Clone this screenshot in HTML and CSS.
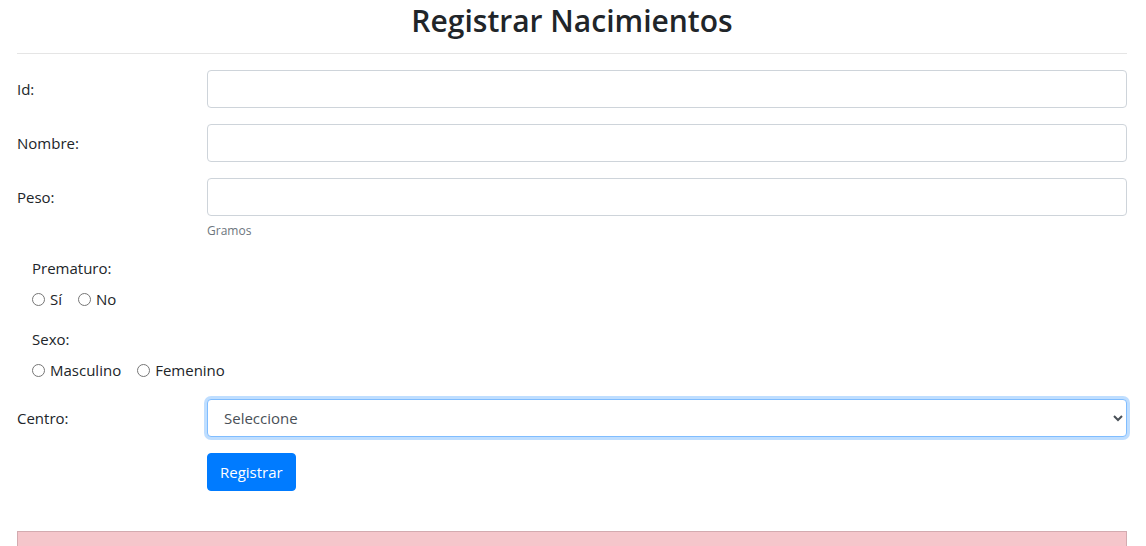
FILE: index.html
```html
<!DOCTYPE html>
<html lang="es">
<head>
<meta charset="utf-8">
<title>Registrar Nacimientos</title>
<link rel="stylesheet" href="styles.css">
</head>
<body>
<main class="container">
  <h1 class="title">Registrar Nacimientos</h1>
  <hr class="divider">
  <form class="form">
    <div class="row">
      <label class="label" for="id">Id:</label>
      <input class="control" id="id" type="text">
    </div>
    <div class="row">
      <label class="label" for="nombre">Nombre:</label>
      <input class="control" id="nombre" type="text">
    </div>
    <div class="row">
      <label class="label" for="peso">Peso:</label>
      <div class="field">
        <input class="control" id="peso" type="text" aria-describedby="peso-help">
        <small class="help" id="peso-help">Gramos</small>
      </div>
    </div>
    <fieldset class="group">
      <legend class="legend">Prematuro:</legend>
      <div class="options">
        <label class="option"><input class="radio" type="radio" name="prematuro" value="si">Sí</label>
        <label class="option"><input class="radio" type="radio" name="prematuro" value="no">No</label>
      </div>
    </fieldset>
    <fieldset class="group">
      <legend class="legend">Sexo:</legend>
      <div class="options">
        <label class="option"><input class="radio" type="radio" name="sexo" value="m">Masculino</label>
        <label class="option"><input class="radio" type="radio" name="sexo" value="f">Femenino</label>
      </div>
    </fieldset>
    <div class="row">
      <label class="label" for="centro">Centro:</label>
      <select class="control select" id="centro" autofocus>
        <option>Seleccione</option>
      </select>
    </div>
    <div class="row">
      <span></span>
      <div><button class="button" type="submit">Registrar</button></div>
    </div>
  </form>
  <div class="alert" role="alert"></div>
</main>
</body>
</html>
```
FILE: styles.css
```css
*, *::before, *::after {
  box-sizing: border-box;
}

body {
  margin: 0;
  background: #fff;
  color: #212529;
  font: 15px/24px "Segoe UI", "Open Sans", "Noto Sans", sans-serif;
}

.container {
  display: flex;
  flex-direction: column;
  min-height: 100vh;
  padding: 0 19px 0 17px;
}

.title {
  margin: 0;
  font-size: 30px;
  line-height: 41px;
  font-weight: 600;
  text-align: center;
}

.divider {
  width: 100%;
  margin: 12px 0 16px;
  border: 0;
  border-top: 1px solid #e5e5e5;
}

.form {
  display: flex;
  flex-direction: column;
  gap: 16px;
}

.row {
  display: grid;
  grid-template-columns: 1fr 5fr;
  column-gap: 6px;
  align-items: start;
}

.label {
  padding: 7px 0;
}

.control {
  display: block;
  width: 100%;
  height: 38px;
  padding: 6px 12px;
  border: 1px solid #ced4da;
  border-radius: 4px;
  background: #fff;
  color: #495057;
  font: inherit;
}

.select {
  border-color: #80bdff;
  outline: 0;
  box-shadow: 0 0 0 3px rgba(0, 123, 255, 0.25);
}

.help {
  display: block;
  margin-top: 4px;
  color: #6c757d;
  font-size: 12px;
  line-height: 21px;
}

.group {
  margin: 0;
  padding: 0 15px 1px;
  border: 0;
}

.legend {
  padding: 0;
  margin-bottom: 8px;
  line-height: 22px;
}

.options {
  display: flex;
  gap: 16px;
}

.option {
  display: flex;
  align-items: center;
  gap: 5px;
}

.radio {
  width: 13px;
  height: 13px;
  margin: 0;
}

.button {
  height: 38px;
  padding: 6px 12px;
  border: 1px solid #007bff;
  border-radius: 4px;
  background: #007bff;
  color: #fff;
  font: inherit;
}

.alert {
  flex: 1;
  margin-top: 40px;
  border: 1px solid #d3abb0;
  border-bottom: 0;
  background: #f5c6cb;
}
```
